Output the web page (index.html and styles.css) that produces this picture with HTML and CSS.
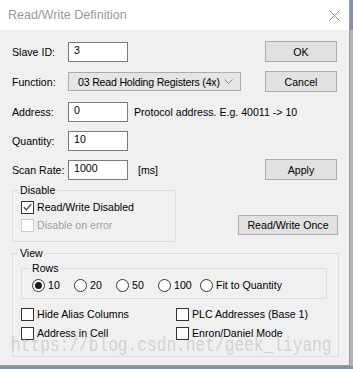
FILE: index.html
```html
<!DOCTYPE html>
<html lang="en">
<head>
  <meta charset="UTF-8" />
  <meta name="viewport" content="width=device-width, initial-scale=1.0" />
  <title>Read/Write Definition</title>
  <link rel="stylesheet" href="styles.css">
</head>
<body>
  <div class="window">
    <!-- Title bar -->
    <div class="titlebar">
      <span class="title">Read/Write Definition</span>
      <svg class="close" width="11" height="11" viewBox="0 0 11 11">
        <path d="M0.5 0.5 L10.5 10.5 M10.5 0.5 L0.5 10.5" stroke="#8e8e8e" stroke-width="1" fill="none" />
      </svg>
    </div>

    <div class="content">
      <div class="row">
        <span class="field-label">Slave ID:</span>
        <input class="textbox" type="text" value="3">
        <button class="btn side">OK</button>
      </div>

      <div class="row tall">
        <span class="field-label">Function:</span>
        <div class="combo">
          <span class="combo-text">03 Read Holding Registers (4x)</span>
          <svg width="9" height="5" viewBox="0 0 9 5">
            <path d="M0.5 0.5 L4.5 4.5 L8.5 0.5" stroke="#8a8a8a" stroke-width="1" fill="none" />
          </svg>
        </div>
        <button class="btn side">Cancel</button>
      </div>

      <div class="row">
        <span class="field-label">Address:</span>
        <input class="textbox" type="text" value="0">
        <span class="hint">Protocol address. E.g. 40011 -&gt; 10</span>
      </div>

      <div class="row">
        <span class="field-label">Quantity:</span>
        <input class="textbox" type="text" value="10">
      </div>

      <div class="row">
        <span class="field-label">Scan Rate:</span>
        <input class="textbox" type="text" value="1000">
        <span class="hint unit">[ms]</span>
        <button class="btn side">Apply</button>
      </div>

      <!-- Disable group -->
      <div class="group-row">
        <fieldset class="group disable">
          <legend>Disable</legend>
          <label class="check">
            <span class="box">
              <svg width="11" height="11" viewBox="0 0 11 11">
                <path d="M1.8 5.2 L4.3 7.8 L9.2 2.2" stroke="#333" stroke-width="1.2" fill="none" />
              </svg>
            </span>
            Read/Write Disabled
          </label>
          <label class="check disabled">
            <span class="box"></span>
            Disable on error
          </label>
        </fieldset>
        <button class="btn once">Read/Write Once</button>
      </div>

      <!-- View group -->
      <fieldset class="group view">
        <legend>View</legend>
        <fieldset class="group rows">
          <legend>Rows</legend>
          <div class="radio-list">
            <label class="radio"><span class="dot on"></span>10</label>
            <label class="radio"><span class="dot"></span>20</label>
            <label class="radio"><span class="dot"></span>50</label>
            <label class="radio"><span class="dot"></span>100</label>
            <label class="radio"><span class="dot"></span>Fit to Quantity</label>
          </div>
        </fieldset>
        <div class="option-grid">
          <label class="check"><span class="box"></span>Hide Alias Columns</label>
          <label class="check"><span class="box"></span>PLC Addresses (Base 1)</label>
          <label class="check"><span class="box"></span>Address in Cell</label>
          <label class="check"><span class="box"></span>Enron/Daniel Mode</label>
        </div>
      </fieldset>
    </div>

    <div class="watermark">https://blog.csdn.net/geek_liyang</div>
  </div>
</body>
</html>
```

FILE: styles.css
```css
* {
  box-sizing: border-box;
}

body {
  margin: 0;
  font-family: "Liberation Sans", Arial, sans-serif;
  font-size: 10.6px;
  color: #000;
  background: linear-gradient(to bottom, #8391a4 0, #8391a4 30px, #b4b4b4 30px, #b4b4b4 366px, #e9e9e9 366px);
}

.window {
  position: relative;
  width: 350px;
  height: 366px;
  background: #f0f0f0;
  border-right: 1px solid #9c9c9c;
  border-bottom: 1px solid #9c9c9c;
  display: flex;
  flex-direction: column;
  overflow: hidden;
}

.titlebar {
  height: 30px;
  background: #fff;
  display: flex;
  align-items: center;
  justify-content: space-between;
  padding: 0 9px 0 8px;
}

.title {
  font-size: 12.6px;
  color: #9a9a9a;
}

.close {
  display: block;
}

.content {
  flex: 1;
  padding: 11px 12px 0 12px;
  display: flex;
  flex-direction: column;
}

.row {
  display: flex;
  align-items: center;
  height: 21px;
  margin-bottom: 8px;
}

.row.tall {
  height: 23px;
}

.field-label {
  width: 56px;
  flex: none;
}

.textbox {
  width: 60px;
  height: 20px;
  margin: 0;
  padding: 0 0 4px 5px;
  border: 1px solid #7a7a7a;
  background: #fff;
  font: inherit;
  color: #000;
  outline: none;
}

.hint {
  margin-left: 6px;
}

.hint.unit {
  margin-left: 10px;
}

.combo {
  width: 173px;
  height: 19px;
  border: 1px solid #adadad;
  background: #e5e5e5;
  display: flex;
  align-items: center;
  justify-content: space-between;
  padding: 0 7px 0 9px;
  white-space: nowrap;
  overflow: hidden;
}

.combo-text {
  letter-spacing: -0.2px;
}

.combo svg {
  display: block;
  flex: none;
}

.btn {
  height: 21px;
  margin: 0;
  padding: 0;
  border: 1px solid #adadad;
  background: #e1e1e1;
  font: inherit;
  color: #000;
}

.btn.side {
  width: 72px;
  margin-left: auto;
}

.group-row {
  display: flex;
  justify-content: space-between;
  align-items: flex-end;
  margin-top: -4px;
}

.btn.once {
  width: 100px;
  height: 20px;
  margin-bottom: 7px;
  margin-right: -1px;
}

.group {
  margin: 0;
  border: 1px solid #dcdcdc;
  padding: 0 8px;
  min-width: 0;
}

.group legend {
  padding: 0 2px;
  margin-left: -3px;
  line-height: 12px;
}

.disable {
  width: 164px;
  padding-bottom: 9px;
  display: flex;
  flex-direction: column;
  gap: 5px;
}

.disable legend + .check {
  margin-top: 5px;
}

.check {
  display: flex;
  align-items: center;
  height: 13px;
  line-height: 13px;
  gap: 3px;
  white-space: nowrap;
}

.box {
  width: 13px;
  height: 13px;
  flex: none;
  border: 1px solid #333;
  background: #fff;
  display: flex;
  align-items: center;
  justify-content: center;
}

.check.disabled {
  color: #a0a0a0;
}

.check.disabled .box {
  border-color: #cccccc;
}

.view {
  margin-top: 5px;
  margin-right: -2px;
  padding: 0 11px 16px 8px;
}

.rows {
  margin-top: 3px;
  padding: 0 8px 6px 10px;
}

.rows legend {
  margin-left: -2px;
}

.radio-list {
  margin-top: 5px;
  display: grid;
  grid-template-columns: 42px 42px 42px 42px auto;
}

.radio {
  display: flex;
  align-items: center;
  gap: 3px;
  height: 13px;
  line-height: 13px;
  white-space: nowrap;
}

.dot {
  width: 13px;
  height: 13px;
  flex: none;
  border: 1px solid #333;
  border-radius: 50%;
  background: #fff;
  display: flex;
  align-items: center;
  justify-content: center;
}

.dot.on::after {
  content: "";
  width: 7px;
  height: 7px;
  border-radius: 50%;
  background: #1a1a1a;
}

.option-grid {
  margin-top: 9px;
  display: grid;
  grid-template-columns: 155px auto;
  row-gap: 6px;
}

.watermark {
  position: absolute;
  left: 11px;
  top: 334px;
  font-family: "Liberation Mono", "Courier New", monospace;
  font-size: 19.5px;
  line-height: 24px;
  color: rgba(185, 185, 185, 0.55);
  transform: scaleX(0.83);
  transform-origin: left top;
  white-space: nowrap;
  pointer-events: none;
}
```
